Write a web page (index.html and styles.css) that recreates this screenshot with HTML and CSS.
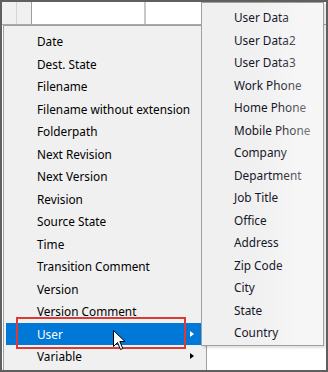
FILE: index.html
```html
<!DOCTYPE html>
<html lang="en">
<head>
    <meta charset="UTF-8">
    <title>Insert Field Menu</title>
    <link rel="stylesheet" href="styles.css">
</head>
<body>
    <div class="frame">
        <div class="grid-row">
            <div class="cell cell-head"></div>
            <div class="cell cell-head cell-dark"></div>
            <div class="cell cell-wide"></div>
            <div class="cell cell-rest"></div>
        </div>
        <div class="grid-body">
            <ul class="menu">
                <li class="item">Date</li>
                <li class="item">Dest. State</li>
                <li class="item">Filename</li>
                <li class="item">Filename without extension</li>
                <li class="item">Folderpath</li>
                <li class="item">Next Revision</li>
                <li class="item">Next Version</li>
                <li class="item">Revision</li>
                <li class="item">Source State</li>
                <li class="item">Time</li>
                <li class="item">Transition Comment</li>
                <li class="item">Version</li>
                <li class="item">Version Comment</li>
                <li class="item item-active has-sub">User<span class="arrow"></span></li>
                <li class="item has-sub">Variable<span class="arrow"></span></li>
            </ul>
        </div>

        <!-- submenu popup for "User" -->
        <ul class="menu submenu">
            <li class="item">User Data</li>
            <li class="item">User Data2</li>
            <li class="item">User Data3</li>
            <li class="item">Work Phone</li>
            <li class="item">Home Phone</li>
            <li class="item">Mobile Phone</li>
            <li class="item">Company</li>
            <li class="item">Department</li>
            <li class="item">Job Title</li>
            <li class="item">Office</li>
            <li class="item">Address</li>
            <li class="item">Zip Code</li>
            <li class="item">City</li>
            <li class="item">State</li>
            <li class="item">Country</li>
        </ul>

        <div class="callout"></div>

        <svg class="cursor" width="13" height="21" viewBox="0 0 13 21">
            <path d="M0.5 0.5 L0.5 16.5 L4.5 12.5 L7.5 19.5 L9.8 18.5 L6.8 11.5 L12 11.5 Z" fill="#fff" stroke="#000" stroke-width="1" stroke-linejoin="miter"/>
        </svg>
    </div>
</body>
</html>
```

FILE: styles.css
```css
/* General */
* {
    box-sizing: border-box;
}

body {
    margin: 0;
    background: #fff;
    font-family: "Noto Sans", "Open Sans", sans-serif;
    font-size: 11.8px;
    color: #000;
}

.frame {
    position: relative;
    width: 328px;
    height: 372px;
    border: 2px solid #5f5f5f;
    display: flex;
    flex-direction: column;
    background: #fff;
    overflow: hidden;
}

/* Grid header row behind the menu */
.grid-row {
    display: flex;
    height: 23px;
    border-bottom: 1px solid #a8a8a8;
}

.cell {
    height: 100%;
}

.cell-head {
    width: 15px;
    background: #f0f0f0;
    border-right: 1px solid #d4d4d4;
}

.cell-dark {
    border-right-color: #9c9c9c;
}

.cell-wide {
    width: 114px;
    border-right: 2px solid #c8c8c8;
}

.cell-rest {
    flex: 1;
}

.grid-body {
    flex: 1;
    display: flex;
    background: #fff;
}

/* Menus */
.menu {
    list-style: none;
    margin: 0;
    padding: 4px 2px 0;
    background: #f0f0f0;
    border: 1px solid #a0a0a0;
}

.grid-body .menu {
    margin-left: 1px;
    width: 204px;
    border-bottom: none;
}

.item {
    position: relative;
    height: 22.5px;
    line-height: 22.5px;
    padding-left: 31px;
    white-space: nowrap;
}

.item-active {
    background: #0078d7;
    color: #fff;
}

.arrow {
    position: absolute;
    right: 10px;
    top: 8px;
    width: 0;
    height: 0;
    border-top: 3.5px solid transparent;
    border-bottom: 3.5px solid transparent;
    border-left: 4px solid #000;
}

.item-active .arrow {
    border-left-color: #fff;
}

.submenu {
    position: absolute;
    left: 199px;
    top: 0;
    width: 123px;
    height: 344px;
    padding-top: 3px;
    color: #16162a;
    background: linear-gradient(to right, #f0f0f0 40%, #f7f7f7);
    box-shadow: 2px 2px 2px rgba(0, 0, 0, 0.12);
}

.submenu .item {
    padding-left: 30px;
}

.submenu::after {
    content: "";
    position: absolute;
    left: 0;
    top: 0;
    right: 0;
    bottom: 0;
    background: linear-gradient(to right, rgba(247, 247, 247, 0) 60%, rgba(247, 247, 247, 0.45) 90%);
    pointer-events: none;
}

/* red highlight box drawn over the screenshot */
.callout {
    position: absolute;
    left: 14px;
    top: 315px;
    width: 170px;
    height: 32px;
    border: 2px solid #dc3a32;
}

.cursor {
    position: absolute;
    left: 111px;
    top: 328px;
}
```
